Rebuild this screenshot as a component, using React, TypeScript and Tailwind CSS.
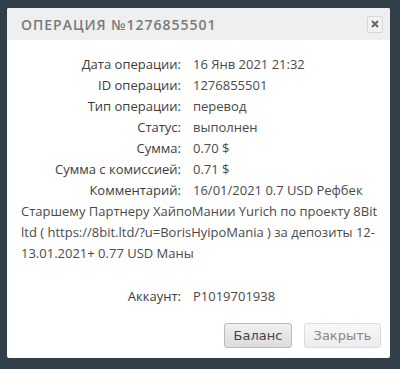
const rows: [string, string][] = [
  ["Дата операции:", "16 Янв 2021 21:32"],
  ["ID операции:", "1276855501"],
  ["Тип операции:", "перевод"],
  ["Статус:", "выполнен"],
  ["Сумма:", "0.70 $"],
  ["Сумма с комиссией:", "0.71 $"],
  [
    "Комментарий:",
    "16/01/2021 0.7 USD Рефбек Старшему Партнеру ХайпоМании Yurich по проекту 8Bit ltd ( https://8bit.ltd/?u=BorisHyipoMania ) за депозиты 12-13.01.2021+ 0.77 USD Маны",
  ],
]

function Row({ label, value }: { label: string; value: string }) {
  return (
    <div className="leading-[21px]">
      <span className="inline-block w-[160px] text-right mr-[12px] text-[#3c3c3c]">{label}</span>
      <span>{value}</span>
    </div>
  )
}

export default function App() {
  return (
    <div className="w-[400px] h-[369px] bg-[#333f48] pt-[8px] pl-[7px] font-['Open_Sans',sans-serif]">
      <div className="w-[383px] h-[350px] bg-white rounded-[2px] overflow-hidden flex flex-col">
        {/* Header */}
        <div className="h-[32px] bg-[#efefef] flex items-center justify-between pl-[14px] pr-[7px]">
          <div className="text-[14px] font-semibold tracking-[0.07em] text-[#7a7a7a] uppercase">
            Операция №1276855501
          </div>
          <button className="w-[16px] h-[17px] border border-[#d6d6d6] rounded-[2px] bg-[#f2f2f2] flex items-center justify-center">
            <svg width="8" height="8" viewBox="0 0 8 8">
              <path d="M1 1L7 7M7 1L1 7" stroke="#666" strokeWidth="2" />
            </svg>
          </button>
        </div>

        {/* Body */}
        <div className="pt-[14px] pl-[14px] pr-[6px] text-[13px] text-[#4a4a4a]">
          {rows.map(([l, v]) => (
            <Row key={l} label={l} value={v} />
          ))}
          <div className="mt-[22px]">
            <Row label="Аккаунт:" value="P1019701938" />
          </div>
        </div>

        {/* Footer */}
        <div className="flex justify-end gap-[12px] pr-[9px] mt-[16px]">
          <button className="w-[68px] h-[25px] rounded-[3px] border border-[#b9b9b9] bg-gradient-to-b from-[#f0f0f0] to-[#dcdcdc] text-[13px] text-[#444] font-['DejaVu_Sans',sans-serif]">
            Баланс
          </button>
          <button className="w-[77px] h-[25px] rounded-[3px] border border-[#dcdcdc] bg-gradient-to-b from-[#f8f8f8] to-[#ececec] text-[13px] text-[#888] font-['DejaVu_Sans',sans-serif]">
            Закрыть
          </button>
        </div>
      </div>
    </div>
  )
}
